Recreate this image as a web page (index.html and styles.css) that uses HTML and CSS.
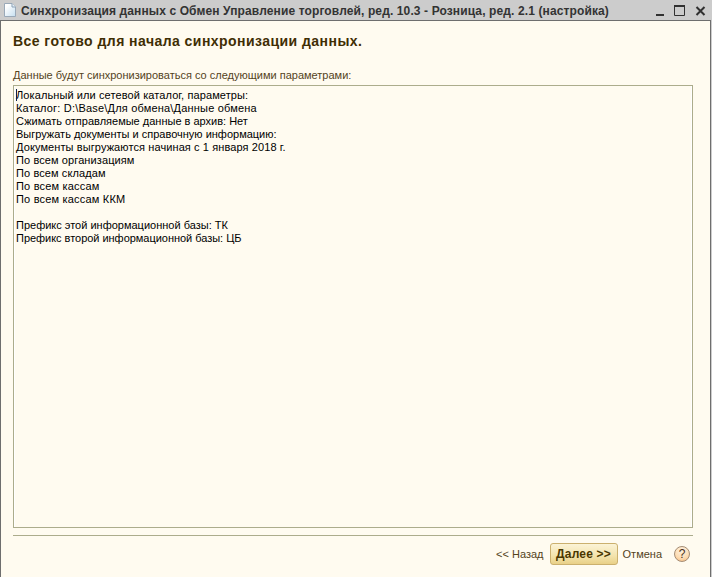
FILE: index.html
```html
<!DOCTYPE html>
<html lang="ru">
<head>
<meta charset="utf-8">
<title>Синхронизация данных</title>
<link rel="stylesheet" href="styles.css">
</head>
<body>
<div class="window">
  <header class="titlebar">
    <svg class="doc-icon" width="12" height="15" viewBox="0 0 12 15">
      <defs><linearGradient id="paper" x1="0" y1="0" x2="1" y2="1"><stop offset="0.2" stop-color="#fff"/><stop offset="1" stop-color="#c5dff0"/></linearGradient></defs>
      <path d="M.5.5H8L11.500 4v9.500H.5Z" fill="url(#paper)" stroke="#9aa9b8"/>
      <path d="M8 .5V4h3.500" fill="#e8f2fa" stroke="#8ba0b5"/>
    </svg>
    <h1 class="caption">Синхронизация данных с Обмен Управление торговлей, ред. 10.3 - Розница, ред. 2.1 (настройка)</h1>
    <svg class="controls" width="50" height="12" viewBox="0 0 50 12" fill="none" stroke="#303030">
      <path d="M0 10h8" stroke-width="2"/>
      <path d="M18.500 1.500h10v9h-10Z"/><path d="M18 1h11" stroke-width="2"/>
      <path d="M40.500 2l8 8M48.500 2l-8 8" stroke-width="2"/>
    </svg>
  </header>
  <main class="client">
    <h2 class="heading">Все готово для начала синхронизации данных.</h2>
    <p class="label">Данные будут синхронизироваться со следующими параметрами:</p>
    <div class="field">
      <i class="caret"></i>
      <p class="line wide">Локальный или сетевой каталог, параметры:</p>
      <p class="line wider">Каталог: D:\Base\Для обмена\Данные обмена</p>
      <p class="line">Сжимать отправляемые данные в архив: Нет</p>
      <p class="line">Выгружать документы и справочную информацию:</p>
      <p class="line wide">Документы выгружаются начиная с 1 января 2018 г.</p>
      <p class="line wide">По всем организациям</p>
      <p class="line wide">По всем складам</p>
      <p class="line wider">По всем кассам</p>
      <p class="line wider">По всем кассам ККМ</p>
      <p class="line"></p>
      <p class="line">Префикс этой информационной базы: ТК</p>
      <p class="line tight">Префикс второй информационной базы: ЦБ</p>
    </div>
    <footer class="actions">
      <button class="button back">&lt;&lt; Назад</button>
      <button class="button next">Далее &gt;&gt;</button>
      <button class="button cancel">Отмена</button>
      <button class="help">?</button>
    </footer>
  </main>
</div>
</body>
</html>
```
FILE: styles.css
```css
* { box-sizing: border-box; margin: 0; padding: 0; }
body { font: 11px/13px "Liberation Sans", Arial, sans-serif; background: #ccc; overflow: hidden; }
.window { display: flex; flex-direction: column; height: 577px; }
.titlebar { display: flex; align-items: center; height: 20px; padding: 0 7px 0 4px; background: #ccc; }
.doc-icon { margin-right: 5px; }
.caption { font-size: 12px; line-height: 14px; font-weight: bold; white-space: nowrap; color: #333; letter-spacing: .12px; padding-top: 2px; }
.controls { margin-left: auto; margin-right: -1px; position: relative; top: 1px; }
.client {
  display: flex; flex-direction: column; flex: 1; margin-right: 1px;
  background: #fffbf0; border: solid #6e6e6e; border-width: 1px 1px 0;
  padding: 12px 17px 0 12px;
}
.heading { font-size: 14px; line-height: 17px; font-weight: bold; color: #3f2e04; letter-spacing: .45px; }
.label { margin-top: 19px; color: #54431c; white-space: nowrap; }
.field { position: relative; margin-top: 3px; height: 443px; border: 1px solid #acac8c; padding: 3px 2px; color: #000; box-shadow: inset -1px 0 #fff, inset 1px 0 #fff; }
.line { height: 13px; white-space: nowrap; }
.wide { letter-spacing: .1px; }
.wider { letter-spacing: .19px; }
.tight { letter-spacing: -.03px; }
.caret { position: absolute; left: 2px; top: 3px; width: 1px; height: 12px; background: #102050; }
.actions { display: flex; justify-content: flex-end; align-items: center; margin-top: 7px; padding: 7px 3px 0 0; border-top: 1px solid #acac8c; }
.button { font: 11px/13px "Liberation Sans", Arial, sans-serif; border: 0; background: none; color: #54431c; white-space: nowrap; }
.back { margin-right: 6px; }
.next {
  width: 68px; height: 22px; border: 1px solid #cbb06e; border-radius: 3px;
  background: linear-gradient(#fbf3d6, #f3e3ac 60%, #e9d088);
  font-size: 12px; font-weight: bold; letter-spacing: .2px; color: #4a3700;
}
.cancel { margin-left: 5px; }
.help {
  width: 16px; height: 16px; margin-left: 12px; border: 1px solid #a58d75; border-radius: 50%;
  background: radial-gradient(circle at 50% 25%, #fff3e2, #fddcb2 60%, #f5b578);
  font: 12px/14px "Liberation Sans", Arial, sans-serif; color: #4a3020;
}
```
